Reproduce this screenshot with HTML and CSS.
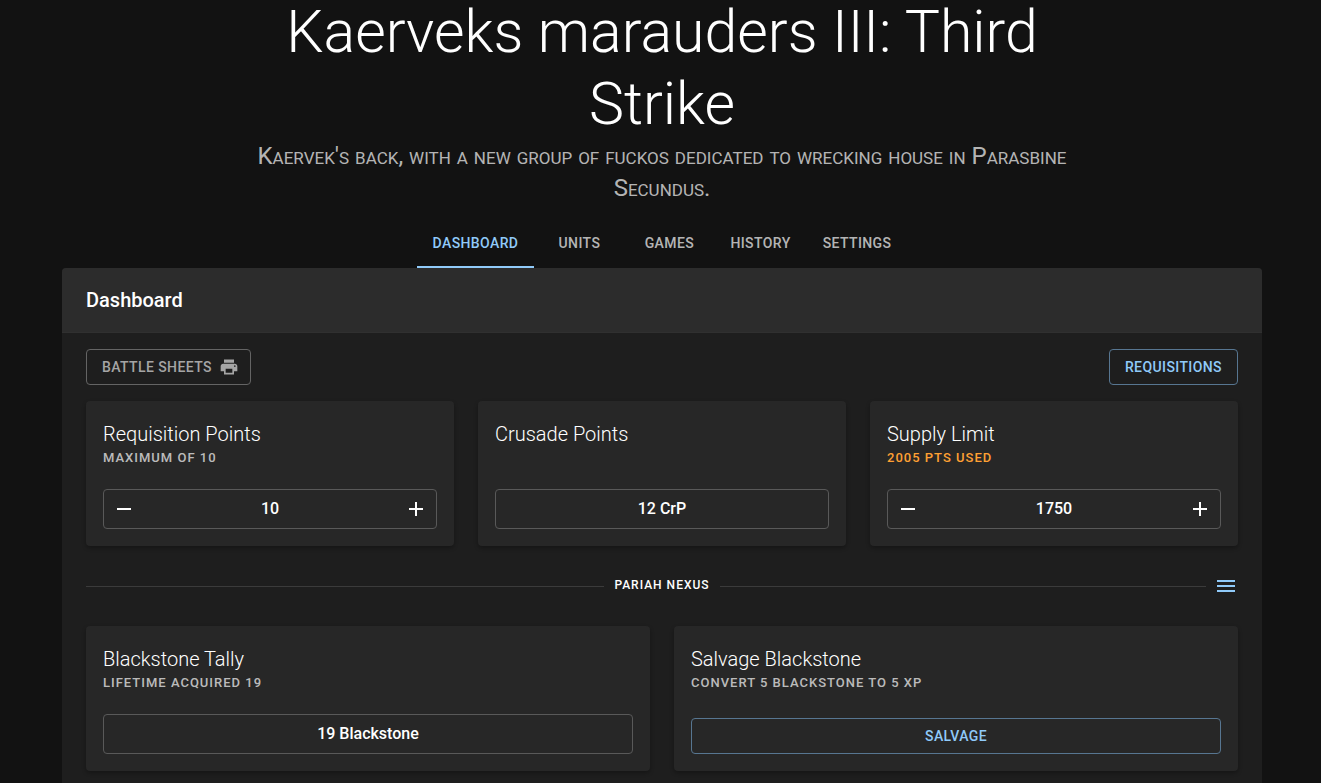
FILE: index.html
```
<!DOCTYPE html>
<html lang="en">
<head>
<meta charset="utf-8">
<title>Kaerveks marauders III: Third Strike</title>
<link rel="stylesheet" href="styles.css">
</head>
<body>
<header class="hero">
  <h1 class="hero-title">Kaerveks marauders III: Third Strike</h1>
  <p class="hero-text">K<span class="sc">aervek</span>'<span class="sc">s</span> <span class="sc">back</span>, <span class="sc">with</span> <span class="sc">a</span> <span class="sc">new</span> <span class="sc">group</span> <span class="sc">of</span> <span class="sc">fuckos</span> <span class="sc">dedicated</span> <span class="sc">to</span> <span class="sc">wrecking</span> <span class="sc">house</span> <span class="sc">in</span> P<span class="sc">arasbine</span> S<span class="sc">ecundus</span>.</p>
</header>
<nav class="tabs">
  <button class="tab tab-active">Dashboard</button>
  <button class="tab">Units</button>
  <button class="tab">Games</button>
  <button class="tab">History</button>
  <button class="tab">Settings</button>
</nav>
<main class="panel">
  <div class="panel-head"><h2 class="panel-title">Dashboard</h2></div>
  <div class="panel-body">
    <div class="actions">
      <button class="btn btn-muted">Battle Sheets
        <svg class="icon-print" viewBox="0 0 24 24"><path d="M19 8H5c-1.660 0-3 1.340-3 3v6h4v4h12v-4h4v-6c0-1.660-1.340-3-3-3zm-3 11H8v-5h8v5zm3-7c-.55 0-1-.45-1-1s.45-1 1-1 1 .45 1 1-.45 1-1 1zm-1-9H6v4h12V3z"/></svg>
      </button>
      <button class="btn btn-blue">Requisitions</button>
    </div>
    <div class="grid grid-three">
      <section class="card">
        <h3 class="card-title">Requisition Points</h3>
        <p class="card-sub">Maximum of 10</p>
        <div class="field">
          <button class="step" aria-label="Decrease requisition points"><svg class="icon" viewBox="0 0 24 24"><path d="M19 13H5v-2h14v2z"/></svg></button>
          <input class="value" aria-label="Requisition points" value="10">
          <button class="step" aria-label="Increase requisition points"><svg class="icon" viewBox="0 0 24 24"><path d="M19 13h-6v6h-2v-6H5v-2h6V5h2v6h6v2z"/></svg></button>
        </div>
      </section>
      <section class="card">
        <h3 class="card-title">Crusade Points</h3>
        <p class="card-sub"></p>
        <div class="field"><input class="value" aria-label="Crusade points" value="12 CrP" readonly></div>
      </section>
      <section class="card">
        <h3 class="card-title">Supply Limit</h3>
        <p class="card-sub card-warn">2005 pts used</p>
        <div class="field">
          <button class="step" aria-label="Decrease supply limit"><svg class="icon" viewBox="0 0 24 24"><path d="M19 13H5v-2h14v2z"/></svg></button>
          <input class="value" aria-label="Supply limit" value="1750">
          <button class="step" aria-label="Increase supply limit"><svg class="icon" viewBox="0 0 24 24"><path d="M19 13h-6v6h-2v-6H5v-2h6V5h2v6h6v2z"/></svg></button>
        </div>
      </section>
    </div>
    <div class="divider">
      <span class="rule"></span>
      <h3 class="divider-label">Pariah Nexus</h3>
      <div class="divider-end">
        <span class="rule"></span>
        <button class="menu" aria-label="Pariah Nexus menu"><svg class="icon" viewBox="0 0 24 24"><path d="M3 18h18v-2H3v2zm0-5h18v-2H3v2zm0-7v2h18V6H3z"/></svg></button>
      </div>
    </div>
    <div class="grid grid-two">
      <section class="card">
        <h3 class="card-title">Blackstone Tally</h3>
        <p class="card-sub">Lifetime acquired 19</p>
        <div class="field"><input class="value" aria-label="Blackstone tally" value="19 Blackstone" readonly></div>
      </section>
      <section class="card">
        <h3 class="card-title">Salvage Blackstone</h3>
        <p class="card-sub">Convert 5 blackstone to 5 XP</p>
        <button class="btn btn-blue btn-wide">Salvage</button>
      </section>
    </div>
  </div>
</main>
</body>
</html>
```
FILE: styles.css
```
* { box-sizing: border-box; }
body {
  margin: 0;
  padding: 0 59px 0 62px;
  background: #121212;
  color: #fff;
  font-family: Roboto, sans-serif;
  font-size: 16px;
  line-height: 24px;
  overflow: hidden;
}
h1, h2, h3, p { margin: 0; }
button, input { font-family: inherit; color: inherit; }
button { cursor: pointer; }
.hero {
  max-width: 852px;
  margin: 0 auto;
  padding: 0 16px;
  text-align: center;
}
.hero-title {
  margin-top: -4px;
  font-size: 59px;
  font-weight: 300;
  line-height: 72px;
}
.hero-text {
  color: rgba(255, 255, 255, 0.7);
  font-size: 24px;
  line-height: 32px;
}
.sc { font-size: 17px; line-height: 1; text-transform: uppercase; }
.tabs {
  display: flex;
  justify-content: center;
  margin-top: 16px;
}
.tab {
  min-width: 90px;
  height: 48px;
  padding: 0 16px;
  border: 0;
  border-bottom: 2px solid transparent;
  background: none;
  color: rgba(255, 255, 255, 0.7);
  font-size: 14px;
  font-weight: 500;
  letter-spacing: 0.4px;
  text-transform: uppercase;
}
.tab-active { border-color: #90caf9; color: #90caf9; }
.panel { border-radius: 4px; background: #1e1e1e; overflow: hidden; }
.panel-head { padding: 16px 24px; border-bottom: 1px solid #303030; background: #2c2c2c; }
.panel-title { font-size: 20px; font-weight: 500; line-height: 32px; }
.panel-body { padding: 16px 24px; }
.actions { display: flex; justify-content: space-between; margin-bottom: 16px; }
.btn {
  display: flex;
  align-items: center;
  justify-content: center;
  gap: 8px;
  height: 36px;
  padding: 0 15px 1px;
  border: 1px solid;
  border-radius: 4px;
  background: none;
  font-size: 14px;
  font-weight: 500;
  letter-spacing: 0.4px;
  text-transform: uppercase;
}
.btn-muted { gap: 7px; padding-right: 11px; border-color: #646464; color: #a5a5a5; }
.btn-blue { border-color: #577691; color: #90caf9; }
.btn-wide { width: 100%; margin-top: auto; }
.icon-print { width: 20px; height: 20px; fill: currentColor; }
.icon { display: block; width: 24px; height: 24px; fill: currentColor; }
.grid { display: grid; gap: 24px; }
.grid-three { grid-template-columns: repeat(3, 1fr); }
.grid-two { grid-template-columns: repeat(2, 1fr); }
.card {
  display: flex;
  flex-direction: column;
  padding: 17px;
  border-radius: 4px;
  background: #272727;
  box-shadow: 0 2px 4px rgba(0, 0, 0, 0.3);
}
.card-title { font-size: 20px; font-weight: 300; line-height: 32px; }
.card-sub {
  height: 15px;
  margin-bottom: 24px;
  color: rgba(255, 255, 255, 0.7);
  font-size: 13px;
  font-weight: 500;
  letter-spacing: 1px;
  line-height: 15px;
  text-transform: uppercase;
}
.card-warn { color: #ffa033; }
.field {
  display: flex;
  height: 40px;
  align-items: center;
  border: 1px solid #595959;
  border-radius: 4px;
}
.value {
  flex: 1;
  min-width: 0;
  padding: 0 0 2px;
  border: 0;
  background: none;
  font-size: 16px;
  font-weight: 500;
  text-align: center;
}
.step { padding: 8px; border: 0; background: none; }
.divider {
  display: grid;
  grid-template-columns: 1fr auto 1fr;
  align-items: center;
  gap: 10px;
  margin: 20px 0;
}
.divider-label {
  padding-bottom: 2px;
  font-size: 12px;
  font-weight: 500;
  letter-spacing: 1px;
  text-transform: uppercase;
}
.divider-end { display: flex; align-items: center; }
.rule { flex: 1; height: 1px; background: #3b3b3b; }
.menu { padding: 8px 0 8px 8px; border: 0; background: none; color: #90caf9; }
```
